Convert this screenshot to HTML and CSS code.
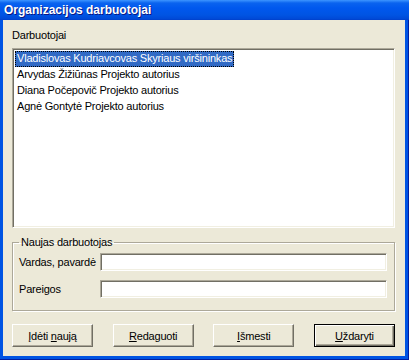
FILE: index.html
```html
<!DOCTYPE html>
<html lang="lt">
<head>
    <meta charset="UTF-8">
    <title>Organizacijos darbuotojai</title>
    <link rel="stylesheet" href="styles.css">
</head>
<body>
    <div class="window">
        <div class="titlebar">
            <span class="title">Organizacijos darbuotojai</span>
        </div>

        <div class="client">
            <!-- Employees list -->
            <div class="list-label">Darbuotojai</div>
            <ul class="listbox">
                <li class="selected">Vladislovas Kudriavcovas Skyriaus viršininkas</li>
                <li>Arvydas Žižiūnas Projekto autorius</li>
                <li>Diana Počepovič Projekto autorius</li>
                <li>Agnė Gontytė Projekto autorius</li>
            </ul>

            <!-- New employee -->
            <fieldset class="group">
                <legend>Naujas darbuotojas</legend>
                <div class="field">
                    <label for="name">Vardas, pavardė</label>
                    <input type="text" id="name">
                </div>
                <div class="field">
                    <label for="position">Pareigos</label>
                    <input type="text" id="position">
                </div>
            </fieldset>

            <div class="buttons">
                <button class="btn"><u>Į</u>dėti <u>n</u>aują</button>
                <button class="btn"><u>R</u>edaguoti</button>
                <button class="btn"><u>I</u>šmesti</button>
                <button class="btn default"><u>U</u>ždaryti</button>
            </div>
        </div>
    </div>
</body>
</html>
```

FILE: styles.css
```css
* {
    margin: 0;
    padding: 0;
    box-sizing: border-box;
}

body {
    width: 409px;
    height: 360px;
    overflow: hidden;
    font-family: 'Liberation Sans', Arial, sans-serif;
    font-size: 11px;
    letter-spacing: -0.2px;
    color: #000;
}

.window {
    width: 409px;
    height: 360px;
    display: flex;
    flex-direction: column;
    background: #0054e3;
    padding: 0 4px 4px 3px;
    box-shadow: inset -1px -1px 0 #001ea0;
}

.titlebar {
    height: 20px;
    margin: 0 -4px 0 -3px;
    padding-left: 4px;
    display: flex;
    align-items: center;
    background: linear-gradient(#3d95ff 0, #0a63ef 3px, #0058ee 8px, #0054e3 15px, #0049d6 19px, #003dc8 20px);
}

.title {
    color: #fff;
    font-weight: bold;
    font-size: 12px;
    letter-spacing: 0;
    text-shadow: 1px 1px 0 #0a1883;
}

.client {
    flex: 1;
    background: #ece9d8;
    padding: 9px 10px 0 9px;
    display: flex;
    flex-direction: column;
}

.list-label {
    line-height: 13px;
    margin-bottom: 6px;
}

/* sunken 3D border */
.listbox,
.field input {
    border: 1px solid;
    border-color: #aca899 #fff #fff #aca899;
    box-shadow: inset 1px 1px 0 #716f64, inset -1px -1px 0 #f1efe2;
    background: #fff;
}

.listbox {
    height: 180px;
    list-style: none;
    padding: 2px;
}

.listbox li {
    height: 16px;
    line-height: 15px;
    padding: 0 2px;
    white-space: nowrap;
}

.listbox li.selected {
    display: inline-block;
    background: #316ac5;
    color: #fff;
    outline: 1px dotted #000;
    outline-offset: -1px;
}

.group {
    margin-top: 8px;
    border: 1px solid #aca899;
    box-shadow: 1px 1px 0 #fff, inset 1px 1px 0 #fff;
    padding: 4px 6px 12px 6px;
}

.group legend {
    padding: 0 2px;
    line-height: 13px;
}

.field {
    display: flex;
    align-items: center;
}

.field + .field {
    margin-top: 9px;
}

.field label {
    width: 81px;
}

.field input {
    flex: 1;
    height: 18px;
    margin-right: 1px;
    outline: none;
    font: inherit;
}

.buttons {
    margin-top: 13px;
    display: flex;
    justify-content: space-between;
}

.btn {
    width: 81px;
    height: 23px;
    font: inherit;
    letter-spacing: inherit;
    color: #000;
    background: #ece9d8;
    border: 1px solid;
    border-color: #fff #716f64 #716f64 #fff;
    box-shadow: inset -1px -1px 0 #aca899;
}

.btn.default {
    border: 1px solid #000;
    box-shadow: inset 1px 1px 0 #fff, inset -1px -1px 0 #716f64, inset -2px -2px 0 #aca899;
}
```
